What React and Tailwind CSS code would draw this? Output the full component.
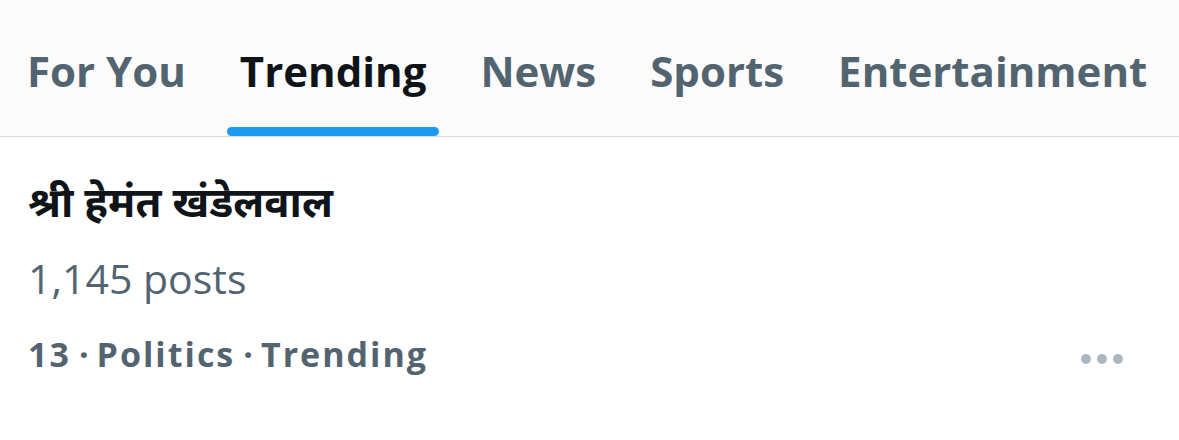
const tabs = ["For You", "Trending", "News", "Sports", "Entertainment"];

function Tab({ label, active }) {
  return (
    <div className="flex flex-col items-stretch">
      <span
        className={
          "h-[92px] flex items-end px-[13px] pb-[2px] text-[42px] font-bold leading-none whitespace-nowrap " +
          (active ? "text-[#0f1419]" : "text-[#536471]")
        }
      >
        {label}
      </span>
      <div
        className={
          "mt-[33px] h-[9px] rounded-full " + (active ? "bg-[#1d9bf0]" : "bg-transparent")
        }
      />
    </div>
  );
}

function Dot() {
  return <span className="tracking-normal">·</span>;
}

export default function App() {
  return (
    <div className="w-[1179px] h-[440px] bg-white overflow-hidden" style={{ fontFamily: "'Open Sans', sans-serif" }}>
      <div className="bg-[#fbfbfb] border-b border-[#d6dadd] pl-[14px] flex gap-[28px] h-[137px] items-end">
        {tabs.map((t) => (
          <Tab key={t} label={t} active={t === "Trending"} />
        ))}
      </div>

      <div className="pl-[28px] pr-[54px] pt-[38px]">
        <div className="text-[42px] font-bold leading-[52px] text-[#0f1419]" style={{ fontFamily: "'Noto Sans', 'Noto Sans Devanagari', sans-serif" }}>
          श्री हेमंत खंडेलवाल
        </div>
        <div className="mt-[27px] text-[41px] leading-[48px] text-[#536471]">
          1,145 posts
        </div>
        <div className="mt-[32px] flex items-center justify-between">
          <div className="flex gap-[8px] text-[34px] font-bold leading-[40px] tracking-[2px] text-[#536471]">
            <span>13</span>
            <Dot />
            <span>Politics</span>
            <Dot />
            <span>Trending</span>
          </div>
          <div className="flex gap-[6px] mr-[2px] mt-[10px]">
            <span className="w-[10px] h-[10px] rounded-full bg-[#aab8c2]" />
            <span className="w-[10px] h-[10px] rounded-full bg-[#aab8c2]" />
            <span className="w-[10px] h-[10px] rounded-full bg-[#aab8c2]" />
          </div>
        </div>
      </div>
    </div>
  );
}
